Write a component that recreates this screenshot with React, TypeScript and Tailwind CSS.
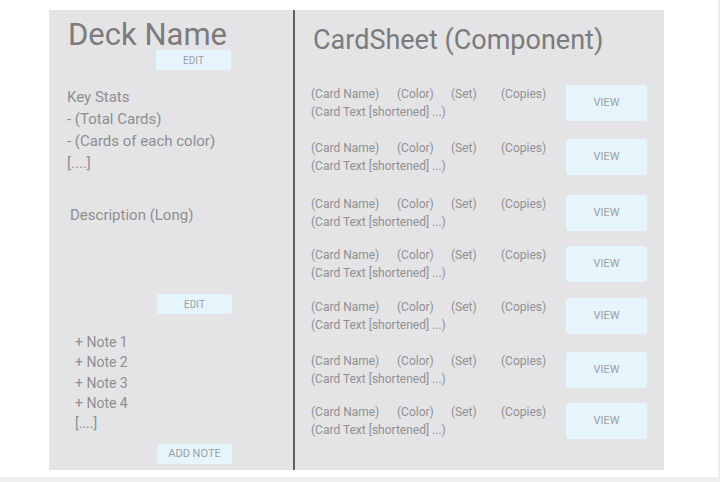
import React from "react";

const rows = [
  "mt-0",
  "mt-[18px]",
  "mt-[20px]",
  "mt-[15px]",
  "mt-[16px]",
  "mt-[18px]",
  "mt-[15px]",
];

function Btn({ label, cls }: { label: string; cls: string }) {
  return (
    <div
      className={`flex items-center justify-center rounded-[3px] bg-[#e6f4fc] text-[#9aa0a6] ${cls}`}
    >
      {label}
    </div>
  );
}

export default function App() {
  return (
    <div
      className="w-[720px] h-[482px] bg-white flex flex-col overflow-hidden"
      style={{ fontFamily: "Roboto, 'Noto Sans', sans-serif" }}
    >
      <div className="flex h-[477px]">
        <div className="w-[718px] pl-[49px] pt-[10px]">
          <div className="flex w-[615px] h-[460px] bg-[#e4e4e6]">
            {/* Left column */}
            <div className="w-[244px] flex flex-col">
              <div className="pl-[19px] pt-[9px] h-[40px] text-[31px] leading-[31px] text-[#7b7b7d]">
                Deck Name
              </div>
              <div className="flex pl-[107px]">
                <Btn label="EDIT" cls="w-[75px] h-[20px] text-[10px]" />
              </div>
              <div className="pl-[18px] mt-[16px] text-[15px] leading-[22px] text-[#8e8e90]">
                <div>Key Stats</div>
                <div>- (Total Cards)</div>
                <div>- (Cards of each color)</div>
                <div>[....]</div>
              </div>
              <div className="pl-[21px] mt-[30px] text-[15px] leading-[22px] text-[#8e8e90]">
                Description (Long)
              </div>
              <div className="flex pl-[108px] mt-[68px]">
                <Btn label="EDIT" cls="w-[75px] h-[20px] text-[10px]" />
              </div>
              <div className="pl-[26px] mt-[18px] text-[14px] leading-[20.3px] text-[#8e8e90]">
                <div>+ Note 1</div>
                <div>+ Note 2</div>
                <div>+ Note 3</div>
                <div>+ Note 4</div>
                <div>[....]</div>
              </div>
              <div className="flex pl-[108px] mt-[11px]">
                <Btn label="ADD NOTE" cls="w-[75px] h-[20px] text-[11px]" />
              </div>
            </div>
            {/* Divider */}
            <div className="w-[2px] bg-[#5f5f61]" />
            {/* Right column */}
            <div className="flex-1 flex flex-col">
              <div className="pl-[18px] pt-[16px] h-[44px] text-[27px] leading-[28px] text-[#7b7b7d]">
                CardSheet (Component)
              </div>
              <div className="flex flex-col mt-[31px] pl-[16px]">
                {rows.map((m, i) => (
                  <div key={i} className={`flex ${m}`}>
                    <div className="w-[255px] h-[36px] text-[12px] leading-[18px] text-[#909092]">
                      <div className="flex">
                        <span className="w-[86px]">(Card Name)</span>
                        <span className="w-[54px]">(Color)</span>
                        <span className="w-[50px]">(Set)</span>
                        <span>(Copies)</span>
                      </div>
                      <div>(Card Text [shortened] ...)</div>
                    </div>
                    <Btn label="VIEW" cls="w-[81px] h-[36px] text-[11px]" />
                  </div>
                ))}
              </div>
            </div>
          </div>
        </div>
        <div className="w-[2px] bg-[#ededed]" />
      </div>
      <div className="h-[5px] bg-[#efefef]" />
    </div>
  );
}
